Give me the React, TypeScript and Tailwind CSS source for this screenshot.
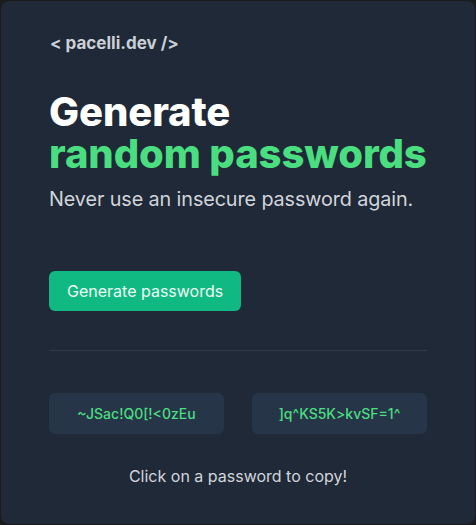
const passwords = ["~JSac!Q0[!<0zEu", "]q^KS5K>kvSF=1^"];

const App = () => {
  return (
    <div className="h-[525px] w-[476px] bg-[#1b1b1b] p-px font-['Inter',sans-serif]">
      <div className="flex h-full flex-col rounded-lg bg-[#1f2937] px-12 pt-[30px]">
        <p className="pl-px text-[17px] font-bold leading-6 text-[#cbd0d6]">&lt; pacelli.dev /&gt;</p>

        <h1 className="mt-9 whitespace-nowrap text-[40px] font-extrabold leading-[42px] tracking-[-0.1px] text-white">
          Generate
          <br />
          <span className="text-[#4ade80]">random passwords</span>
        </h1>
        <p className="mt-[10px] text-[19.8px] leading-7 tracking-[-0.1px] text-[#d1d5db]">
          Never use an insecure password again.
        </p>

        <div>
          <button className="mt-[58px] h-10 rounded-md bg-[#10b981] px-[18px] text-base text-[#eefbf4]">
            Generate passwords
          </button>
        </div>

        <div className="mt-[39px] h-px w-full shrink-0 bg-[#2f3a4a]" />

        <div className="mt-[42px] grid grid-cols-2 gap-7">
          {passwords.map((p) => (
            <button
              key={p}
              className="h-[41px] rounded-md bg-[#273549] text-sm font-medium text-[#4ade80]"
            >
              {p}
            </button>
          ))}
        </div>

        <p className="mt-[30px] text-center text-base leading-6 text-[#d1d5db]">
          Click on a password to copy!
        </p>
      </div>
    </div>
  );
};

export default App;
